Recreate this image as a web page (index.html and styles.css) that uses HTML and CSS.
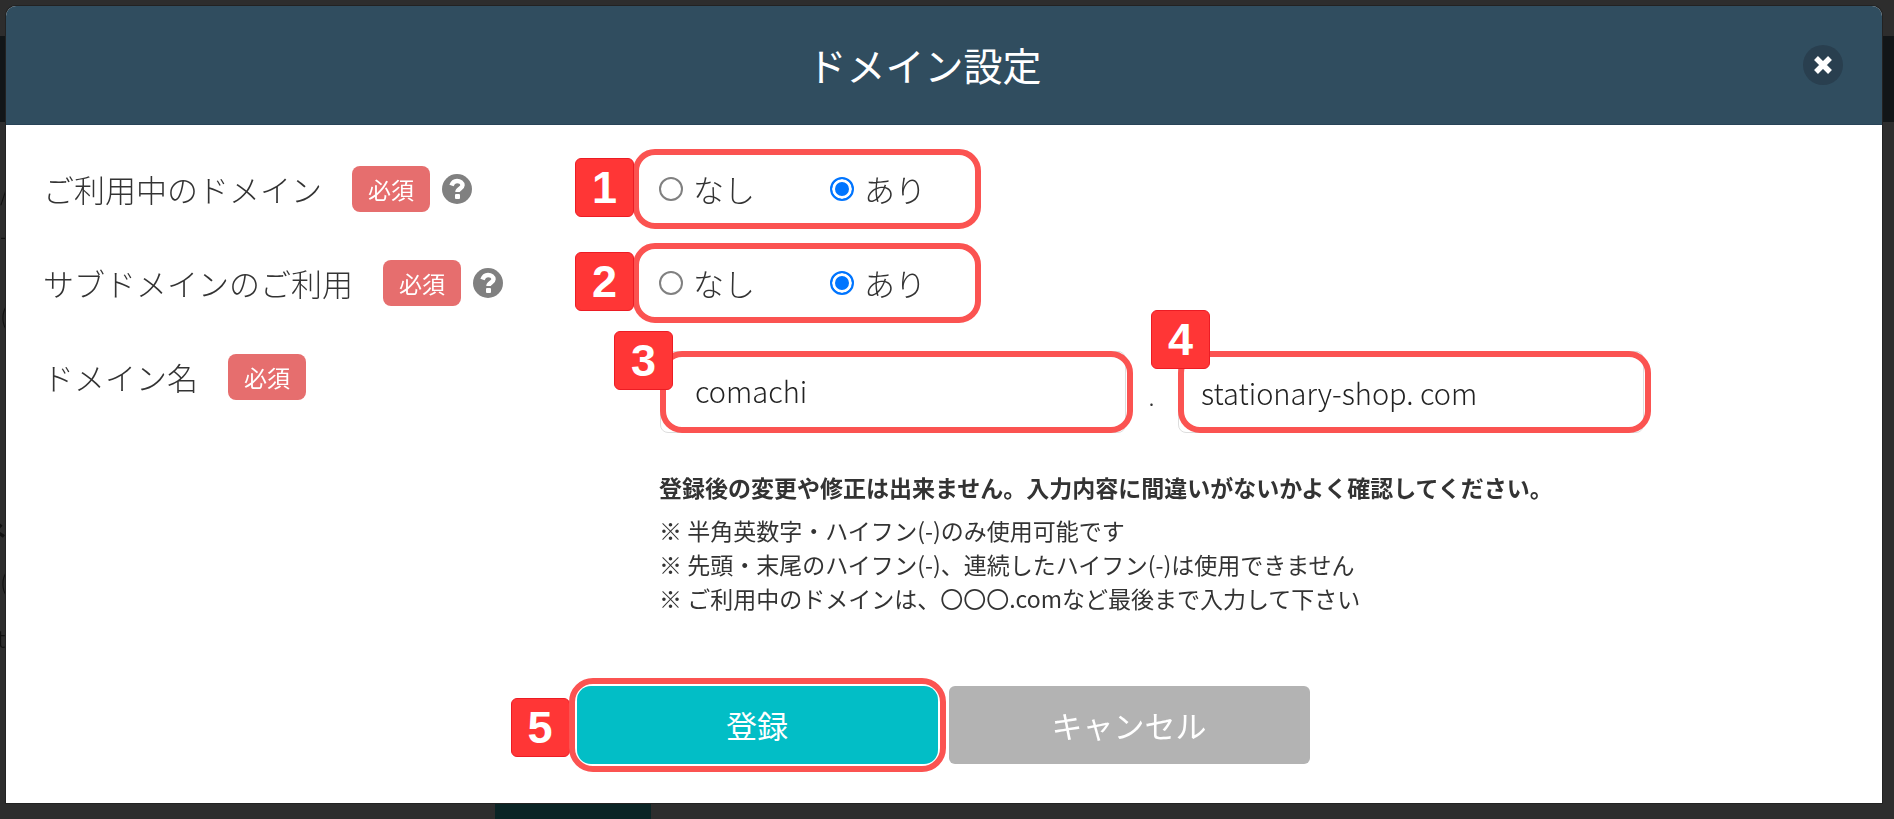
FILE: index.html
```html
<!DOCTYPE html>
<html lang="ja">
<head>
<meta charset="utf-8">
<title>ドメイン設定</title>
<link rel="stylesheet" href="styles.css">
</head>
<body>
<div class="backdrop" aria-hidden="true">
  <div class="backdrop-nav"></div>
  <div class="backdrop-button"></div>
  <span class="backdrop-text line-a">ネ</span>
  <span class="backdrop-text line-b">(</span>
  <span class="backdrop-text line-c">t</span>
  <span class="backdrop-text line-d">(</span>
  <span class="backdrop-text line-e">/</span>
  <span class="backdrop-text line-f">-</span>
</div>
<main class="modal" role="dialog" aria-labelledby="title">
  <header class="modal-header">
    <h1 class="title" id="title">ドメイン設定</h1>
    <button class="close" type="button" aria-label="閉じる">
      <svg width="20" height="20" viewBox="0 0 20 20"><path d="M3 3L17 17M17 3L3 17" stroke="#fff" stroke-width="5.500"/></svg>
    </button>
  </header>
  <form class="form">
    <fieldset class="row">
      <div class="label">
        <span id="domain-label">ご利用中のドメイン</span><span class="required">必須</span>
        <svg class="help" viewBox="0 0 30 30"><circle cx="15" cy="15" r="15" fill="#808080"/><path d="M9.500 11.500C10.500 8.500 12 7 15 7C18.200 7 20.500 8.800 20.500 11.300C20.500 14.600 15.500 14.600 15.500 18" fill="none" stroke="#fff" stroke-width="4.500"/><rect x="13" y="20" width="5" height="5" rx="1" fill="#fff"/></svg>
      </div>
      <div class="choices" role="radiogroup" aria-labelledby="domain-label">
        <label class="choice"><input class="radio" type="radio" name="domain">なし</label>
        <label class="choice"><input class="radio" type="radio" name="domain" checked>あり</label>
        <span class="step">1</span>
      </div>
    </fieldset>
    <fieldset class="row">
      <div class="label">
        <span id="sub-label">サブドメインのご利用</span><span class="required">必須</span>
        <svg class="help" viewBox="0 0 30 30"><circle cx="15" cy="15" r="15" fill="#808080"/><path d="M9.500 11.500C10.500 8.500 12 7 15 7C18.200 7 20.500 8.800 20.500 11.300C20.500 14.600 15.500 14.600 15.500 18" fill="none" stroke="#fff" stroke-width="4.500"/><rect x="13" y="20" width="5" height="5" rx="1" fill="#fff"/></svg>
      </div>
      <div class="choices" role="radiogroup" aria-labelledby="sub-label">
        <label class="choice"><input class="radio" type="radio" name="sub">なし</label>
        <label class="choice"><input class="radio" type="radio" name="sub" checked>あり</label>
        <span class="step">2</span>
      </div>
    </fieldset>
    <div class="row">
      <div class="label"><label for="host">ドメイン名</label><span class="required">必須</span></div>
      <div class="fields">
        <div class="field"><input class="text" id="host" type="text" value="comachi"><span class="step step-corner">3</span></div>
        <span class="dot">.</span>
        <div class="field"><input class="text" type="text" aria-label="ドメイン" value="stationary-shop. com"><span class="step step-corner">4</span></div>
      </div>
    </div>
    <div class="notes">
      <p class="warning">登録後の変更や修正は出来ません。入力内容に間違いがないかよく確認してください。</p>
      <p class="note">※ 半角英数字・ハイフン(-)のみ使用可能です</p>
      <p class="note">※ 先頭・末尾のハイフン(-)、連続したハイフン(-)は使用できません</p>
      <p class="note">※ ご利用中のドメインは、〇〇〇.comなど最後まで入力して下さい</p>
    </div>
    <div class="actions">
      <div class="submit-wrap"><button class="button submit" type="submit">登録</button><span class="step">5</span></div>
      <button class="button cancel" type="button">キャンセル</button>
    </div>
  </form>
</main>
</body>
</html>
```
FILE: styles.css
```css
* { box-sizing: border-box; }
body {
  margin: 0;
  padding: 6px 12px 16px 6px;
  background: #2d2d2d;
  color: #333;
  font-family: "Noto Sans CJK JP", sans-serif;
  font-size: 31px;
  font-weight: 300;
  line-height: 46px;
}
button, input { font: inherit; }
p, h1 { margin: 0; }

.backdrop { position: fixed; inset: 0; overflow: hidden; }
.backdrop-nav { position: absolute; top: 36px; left: 0; right: 0; height: 86px; background: #121618; }
.backdrop-button { position: absolute; bottom: 0; left: 495px; width: 156px; height: 20px; background: #0a2425; }
.backdrop-text { position: absolute; color: #111; font-size: 24px; }
.line-a { top: 507px; left: -18px; font-weight: 700; }
.line-b { top: 558px; left: 0; }
.line-c { top: 615px; left: -3px; }
.line-d { top: 292px; left: 0; }
.line-e { top: 168px; left: 0; }
.line-f { top: 212px; left: 0; }

.modal { position: relative; background: #fff; border-radius: 10px 10px 0 0; box-shadow: 0 0 0 1px #222; }
.modal-header {
  display: grid;
  grid-template-columns: 1fr auto 1fr;
  align-items: center;
  height: 119px;
  padding: 0 39px 0 0;
  background: #304d5f;
  border-bottom: 1px solid #284357;
  border-radius: 10px 10px 0 0;
}
.title { grid-column: 2; padding-bottom: 2px; color: #fff; font-size: 39px; font-weight: 400; line-height: 56px; }
.close {
  display: grid;
  place-items: center;
  justify-self: end;
  width: 40px;
  height: 40px;
  padding: 0;
  border: 0;
  border-radius: 50%;
  background: #293f4f;
}

.form { padding: 17px 39px 39px 37px; }
.row { display: flex; height: 94px; margin: 0; padding: 0; border: 0; }
.label { display: flex; align-items: center; flex: 0 0 617px; }
.required {
  margin-left: 30px;
  padding: 0 16px;
  border-radius: 8px;
  background: #e66e6e;
  color: #fff;
  font-size: 23px;
  font-weight: 400;
}
.help { width: 30px; height: 30px; margin-left: 12px; }

.choices {
  position: relative;
  display: flex;
  align-items: center;
  align-self: center;
  gap: 75px;
  width: 348px;
  height: 80px;
  margin-left: -27px;
  padding-left: 20px;
  border: 6px solid #fb5351;
  border-radius: 22px;
}
.choice { display: flex; align-items: center; gap: 10px; }
.radio {
  appearance: none;
  width: 24px;
  height: 24px;
  margin: 0;
  border: 2px solid #808080;
  border-radius: 50%;
}
.radio:checked { border-color: #0075ff; background: #0075ff; box-shadow: inset 0 0 0 3px #fff; }

.step {
  position: absolute;
  left: -64px;
  top: 50%;
  width: 59px;
  height: 59px;
  margin-top: -31px;
  border: 1px solid #ec1c24;
  border-radius: 6px;
  background: #ff3636;
  color: #fff;
  font: 700 45px/57px "Liberation Sans", sans-serif;
  text-align: center;
}
.step-corner { left: -46px; top: -20px; margin: 0; }

.fields { display: flex; flex: 1; padding-top: 21px; }
.field { position: relative; width: 473px; height: 82px; }
.field::after {
  content: "";
  position: absolute;
  inset: 0;
  border: 6px solid #fb5351;
  border-radius: 22px;
  pointer-events: none;
}
.text {
  width: 466px;
  height: 82px;
  padding: 0 34px 4px;
  border: 1px solid #ddd;
  border-radius: 8px;
  background: #fff;
  color: #222;
  font-size: 29px;
}
.field .step { z-index: 1; }
.dot { width: 45px; padding: 22px 8px 0 0; text-align: center; font-size: 24px; }
.field:last-child .text { padding: 0 22px; }
.field:last-child .step { left: -27px; top: -41px; }

.notes { margin: 46px 0 0 616px; font-size: 23px; font-weight: 400; line-height: 34px; }
.warning { margin-bottom: 9px; font-weight: 700; }

.actions { display: flex; justify-content: center; gap: 11px; margin-top: 71px; }
.submit-wrap { position: relative; }
.submit-wrap::after {
  content: "";
  position: absolute;
  inset: -8px;
  border: 6px solid #fb5351;
  border-radius: 24px;
  pointer-events: none;
}
.button { width: 361px; height: 78px; padding: 0; border: 0; border-radius: 6px; color: #fff; font-weight: 400; }
.submit { display: block; border-radius: 14px; background: #02bec6; }
.cancel { background: #b3b3b3; }
.submit-wrap .step { left: -66px; top: 43px; }
```
